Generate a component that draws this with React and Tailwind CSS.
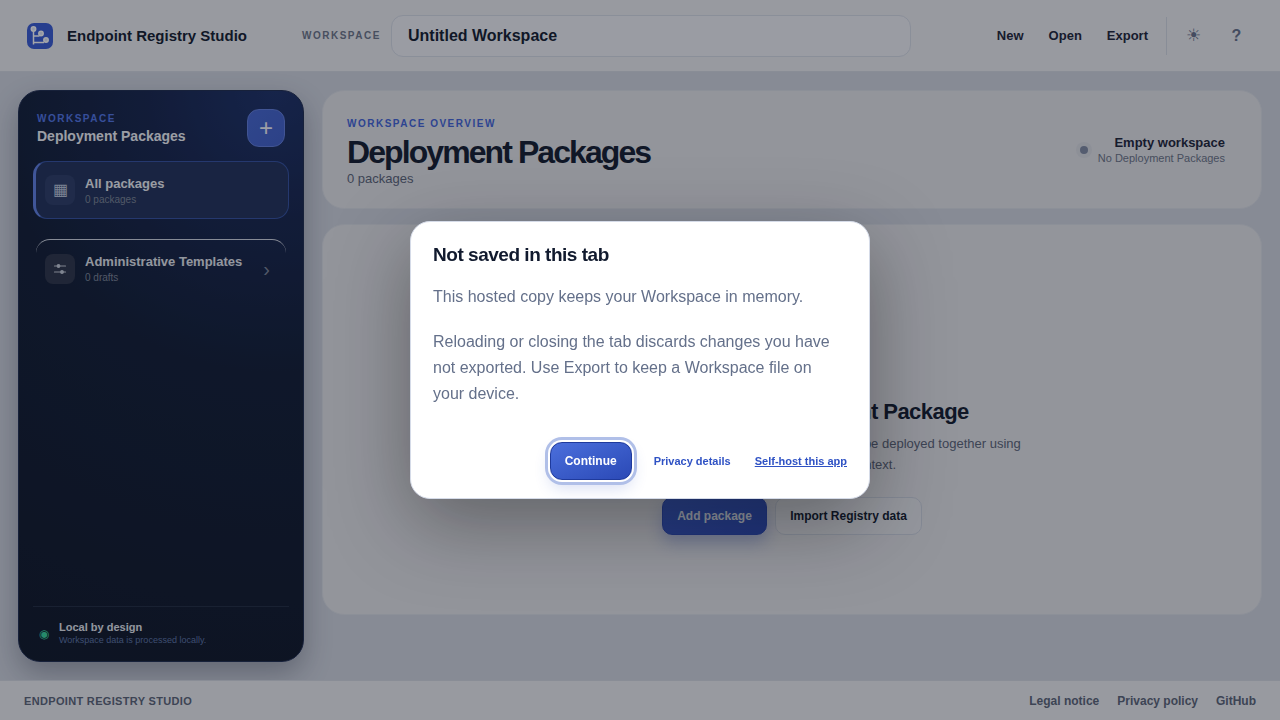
function Logo() {
    return (
        <svg width="26" height="26" viewBox="0 0 26 26" className="shrink-0">
            <rect width="26" height="26" rx="7" fill="#3659d4" />
            <g fill="none" stroke="#fff" strokeWidth="1.5">
                <path d="M6.5 8v13.5M6.5 13h6M6.5 19.5h10.5" />
                <circle cx="6.5" cy="6" r="2.2" fill="#dfe6fb" />
                <circle cx="14" cy="10.5" r="2.2" fill="#dfe6fb" />
                <circle cx="19" cy="17" r="2.2" fill="#dfe6fb" />
            </g>
        </svg>
    );
}

function SliderIcon() {
    return (
        <svg width="14" height="14" viewBox="0 0 14 14" fill="currentColor" stroke="currentColor" strokeWidth="1.2" strokeLinecap="round">
            <path d="M1.5 4h11M1.5 10h11" />
            <circle cx="5.5" cy="4" r="1.3" />
            <circle cx="9" cy="10" r="1.3" />
        </svg>
    );
}

function Topbar() {
    return (
        <header className="h-[72px] shrink-0 flex items-center bg-[#eceef1] border-b border-[#d3d8e1] pl-[27px] pr-[27px]">
            <Logo />
            <span className="ml-[14px] mt-px w-[235px] text-[15px] font-bold text-[#111a2e]">Endpoint Registry Studio</span>
            <span className="text-[10px] font-bold tracking-[0.15em] text-[#6b7488] w-[89px]">WORKSPACE</span>
            <div className="w-[520px] h-[42px] flex items-center px-4 rounded-xl border border-[#d5dbe6] bg-[#eff1f5] text-base font-bold text-[#111a2e]">
                Untitled Workspace
            </div>
            <nav className="ml-auto flex items-center text-[13px] font-bold text-[#1a2338]">
                <span>New</span>
                <span className="ml-[25px]">Open</span>
                <span className="ml-[25px]">Export</span>
                <span className="ml-[18px] w-px h-[38px] bg-[#d2d8e2]" />
                <span className="w-[53px] text-center text-[#64708a] text-[17px] font-normal">☀</span>
                <span className="w-[33px] text-center text-[#64708a] text-base">?</span>
            </nav>
        </header>
    );
}

function Sidebar() {
    return (
        <aside className="w-[286px] shrink-0 flex flex-col rounded-[22px] px-[14px] pt-[18px] pb-[14px] border border-[#1c2a4d] bg-[radial-gradient(circle_at_90%_0%,#1a2f66_0%,#14234b_20%,#0f1b33_45%,#0c1526_100%)] shadow-[0_12px_28px_rgba(15,23,42,0.3)]">
            <div className="flex items-start justify-between px-[4px]">
                <div className="pt-[4px]">
                    <div className="text-[10px] leading-3 font-bold tracking-[0.15em] text-[#4f74e6]">WORKSPACE</div>
                    <div className="mt-[1px] text-sm leading-5 font-bold text-[#f1f4f9]">Deployment Packages</div>
                </div>
                <div className="w-[38px] h-[38px] flex items-center justify-center rounded-xl border border-[#5f7ddc] bg-gradient-to-br from-[#4466d2] to-[#3f5fc8] text-[#f4f6fb] text-[24px] font-light">
                    +
                </div>
            </div>

            <div className="mt-[14px] h-[58px] flex items-center pl-[9px] rounded-[14px] border border-[#3250a0] border-l-[3px] border-l-[#5e80e6] bg-[#1f3059]">
                <span className="w-[30px] h-[30px] flex items-center justify-center rounded-lg bg-[#2b3b66] text-[#b9c3d8] text-base">▦</span>
                <div className="ml-[10px] pt-[2px]">
                    <div className="text-[13px] leading-4 font-bold text-[#eef1f6]">All packages</div>
                    <div className="mt-[2px] text-[10px] leading-3 text-[#7b8496]">0 packages</div>
                </div>
            </div>

            <div className="mt-5 mx-[3px] h-[58px] flex items-center pl-[9px] pr-[16px] rounded-[14px] border-t border-[#cfd5e0]">
                <span className="w-[30px] h-[30px] flex items-center justify-center rounded-lg bg-[#2b3347] text-[#c5ccd8]">
                    <SliderIcon />
                </span>
                <div className="ml-[10px] flex-1">
                    <div className="text-[13px] leading-4 font-bold text-[#e3e7ee]">Administrative Templates</div>
                    <div className="mt-[2px] text-[10px] leading-3 text-[#7b8496]">0 drafts</div>
                </div>
                <span className="text-[#7b8496] text-xl">›</span>
            </div>

            <div className="mt-auto border-t border-[#1f2a40] pt-[14px] pl-[6px] flex items-center">
                <span className="w-[20px] text-xs text-[#34d399]">◉</span>
                <div>
                    <div className="text-[11px] leading-[13px] font-bold text-[#e3e7ee]">Local by design</div>
                    <div className="text-[9px] leading-[13px] text-[#5a73a3]">Workspace data is processed locally.</div>
                </div>
            </div>
        </aside>
    );
}

function Overview() {
    return (
        <section className="h-[119px] shrink-0 flex items-center justify-between rounded-[22px] border border-[#d9dde4] bg-[#e4e5e9] pl-6 pr-9">
            <div className="pt-[4px]">
                <div className="text-[10px] leading-3 font-bold tracking-[0.15em] text-[#3f63d8]">WORKSPACE OVERVIEW</div>
                <h1 className="mt-[2px] text-[32px] leading-[40px] font-bold tracking-[-0.06em] text-[#111a2e]">Deployment Packages</h1>
                <div className="text-[13px] leading-[14px] text-[#596377]">0 packages</div>
            </div>
            <div className="flex items-center">
                <span className="w-4 h-4 rounded-full bg-[#dadde3] flex items-center justify-center">
                    <span className="w-2 h-2 rounded-full bg-[#7e8aa2]" />
                </span>
                <div className="ml-[6px] text-right">
                    <div className="text-[13px] leading-4 font-bold text-[#1a2338]">Empty workspace</div>
                    <div className="text-[11px] leading-[14px] text-[#697386]">No Deployment Packages</div>
                </div>
            </div>
        </section>
    );
}

function EmptyState() {
    return (
        <section className="mt-[15px] h-[391px] shrink-0 flex flex-col items-center justify-center rounded-[22px] border border-[#d9dde4] bg-[#e4e5e9]">
            <div className="w-[64px] h-[64px] rounded-2xl bg-[#dadfea]" />
            <h2 className="mt-[30px] text-[22px] leading-7 font-bold tracking-[-0.025em] text-[#111a2e]">Add your first Deployment Package</h2>
            <p className="mt-[7px] w-[460px] text-center text-[13px] leading-[21px] text-[#596377]">
                Create one package to group the endpoints that will be deployed together using a single shared deployment context.
            </p>
            <div className="mt-[22px] flex gap-2 text-xs font-bold">
                <span className="w-[105px] h-[38px] flex items-center justify-center rounded-[10px] bg-gradient-to-br from-[#3a5cc8] to-[#2b4ab8] border border-[#2b4ab8] text-[#dfe3ee] shadow-[0_8px_16px_rgba(49,83,196,0.3)]">Add package</span>
                <span className="w-[147px] h-[38px] flex items-center justify-center rounded-[10px] bg-[#e7e9ed] border border-[#ccd3df] text-[#111a2e]">Import Registry data</span>
            </div>
        </section>
    );
}

function Footer() {
    return (
        <footer className="h-[40px] shrink-0 flex items-center justify-between bg-[#eceef1] border-t border-[#d3d8e1] pt-px px-6 text-xs font-bold text-[#596377]">
            <span className="text-[11px] tracking-[0.03em]">ENDPOINT REGISTRY STUDIO</span>
            <div className="flex gap-[18px]">
                <span>Legal notice</span>
                <span>Privacy policy</span>
                <span>GitHub</span>
            </div>
        </footer>
    );
}

function NoticeDialog() {
    return (
        <div className="fixed inset-0 bg-[rgba(15,18,28,0.38)]">
            <div className="absolute left-[410px] top-[221px] w-[460px] h-[278px] rounded-[20px] border border-[#d5dbe8] bg-white px-[22px] pt-[21px] shadow-[0_24px_80px_rgba(0,0,0,0.35)]">
                <h2 className="text-[19px] leading-[24px] font-bold tracking-[-0.025em] text-[#111a2e]">Not saved in this tab</h2>
                <p className="mt-[17px] text-base leading-[26px] text-[#64708a]">This hosted copy keeps your Workspace in memory.</p>
                <p className="mt-[19px] text-base leading-[26px] text-[#64708a]">
                    Reloading or closing the tab discards changes you have not exported. Use Export to keep a Workspace file on your device.
                </p>
                <div className="mt-[35px] flex items-center justify-end text-[11px] font-bold text-[#2f52c4]">
                    <button className="w-[82px] h-[38px] rounded-[12px] border border-[#1f3a9c] bg-gradient-to-br from-[#4b6fdc] to-[#2b49b6] text-xs font-bold text-white shadow-[0_0_0_2px_#ffffff,0_0_0_5px_#b0bfe8,0_8px_16px_rgba(49,83,196,0.2)]">
                        Continue
                    </button>
                    <span className="ml-[22px]">Privacy details</span>
                    <span className="ml-6 underline">Self-host this app</span>
                </div>
            </div>
        </div>
    );
}

export default function App() {
    return (
        <div className="h-screen flex flex-col overflow-hidden bg-[#d0d5df] font-['Liberation_Sans',Arial,sans-serif]">
            <Topbar />
            <div className="flex-1 flex gap-[18px] p-[18px] min-h-0">
                <Sidebar />
                <main className="flex-1 flex flex-col min-w-0">
                    <Overview />
                    <EmptyState />
                </main>
            </div>
            <Footer />
            <NoticeDialog />
        </div>
    );
}
